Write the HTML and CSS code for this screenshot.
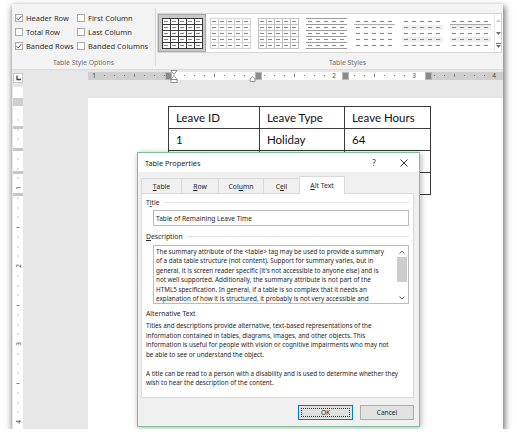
FILE: index.html
```html
<!DOCTYPE html>
<html lang="en">
<head>
    <meta charset="UTF-8">
    <title>Table Properties - Alt Text</title>
    <link rel="stylesheet" href="styles.css">
</head>
<body>
<div class="shot">
    <div class="ribbon">
        <div class="style-options">
            <div class="option-grid">
                <div class="opt"><span class="box"><svg width="6" height="6" viewBox="0 0 6 6"><polyline points="0.6,3.2 2.3,4.9 5.4,1.1" fill="none" stroke="#3c3c3c" stroke-width="0.9"/></svg></span>Header Row</div>
                <div class="opt"><span class="box"></span>First Column</div>
                <div class="opt"><span class="box"></span>Total Row</div>
                <div class="opt"><span class="box"></span>Last Column</div>
                <div class="opt"><span class="box"><svg width="6" height="6" viewBox="0 0 6 6"><polyline points="0.6,3.2 2.3,4.9 5.4,1.1" fill="none" stroke="#3c3c3c" stroke-width="0.9"/></svg></span>Banded Rows</div>
                <div class="opt"><span class="box"></span>Banded Columns</div>
            </div>
            <div class="group-label">Table Style Options</div>
        </div>
        <div class="group-sep"></div>
        <div class="table-styles">
            <div class="gallery">
                <div class="thumbs">
                    <div class="thumb sel">
                        <svg width="41" height="31">
                            <defs>
                                <pattern id="tsDash" width="8" height="6" patternUnits="userSpaceOnUse">
                                    <rect x="2" y="3" width="4" height="1" fill="#858585"/>
                                </pattern>
                            </defs>
                            <rect width="41" height="31" fill="url(#tsDash)"/>
                            <path d="M0 .5h41M0 6.5h41M0 12.5h41M0 18.5h41M0 24.5h41M0 30.5h41M.5 0v31M8.5 0v31M16.5 0v31M24.5 0v31M32.5 0v31M40.5 0v31" stroke="#3a3a3a"/>
                        </svg>
                    </div>
                    <div class="thumb">
                        <svg width="41" height="31">
                            <rect width="41" height="31" fill="url(#tsDash)"/>
                            <path d="M0 .5h41M0 6.5h41M0 12.5h41M0 18.5h41M0 24.5h41M0 30.5h41M.5 0v31M8.5 0v31M16.5 0v31M24.5 0v31M32.5 0v31M40.5 0v31" stroke="#d4d4d4"/>
                        </svg>
                    </div>
                    <div class="thumb">
                        <svg width="41" height="31">
                            <rect width="41" height="31" fill="url(#tsDash)"/>
                            <path d="M0 .5h41M0 6.5h41M0 12.5h41M0 18.5h41M0 24.5h41M0 30.5h41M.5 0v31M8.5 0v31M16.5 0v31M24.5 0v31M32.5 0v31M40.5 0v31" stroke="#c2c2c2"/>
                        </svg>
                    </div>
                    <div class="thumb">
                        <svg width="41" height="31">
                            <rect width="41" height="31" fill="url(#tsDash)"/>
                            <path d="M0 .5h41M0 6.5h41M0 12.5h41M0 18.5h41M0 24.5h41M0 30.5h41" stroke="#9c9c9c"/>
                        </svg>
                    </div>
                    <div class="thumb">
                        <svg width="41" height="31">
                            <rect width="41" height="31" fill="url(#tsDash)"/>
                            <path d="M0 6.5h41" stroke="#b0b0b0"/>
                        </svg>
                    </div>
                    <div class="thumb">
                        <svg width="41" height="31">
                            <path d="M0 7h41v5H0zM0 19h41v5H0z" fill="#efefef"/>
                            <rect width="41" height="31" fill="url(#tsDash)"/>
                        </svg>
                    </div>
                    <div class="thumb">
                        <svg width="41" height="31">
                            <path d="M0 7h41v5H0zM0 19h41v5H0z" fill="#efefef"/>
                            <rect width="41" height="31" fill="url(#tsDash)"/>
                            <path d="M0 6.5h41" stroke="#a8a8a8"/>
                        </svg>
                    </div>
                </div>
                <div class="gallery-scroll">
                    <span class="gs-btn"><svg width="5" height="3"><path d="M0 3L2.5 0 5 3z" fill="#cfcfcf"/></svg></span>
                    <span class="gs-btn"><svg width="5" height="3"><path d="M0 0L2.5 3 5 0z" fill="#6f6f6f"/></svg></span>
                    <span class="gs-btn"><svg width="5" height="5"><path d="M0 .5h5" stroke="#6f6f6f"/><path d="M0 2L2.5 5 5 2z" fill="#6f6f6f"/></svg></span>
                </div>
            </div>
            <div class="group-label">Table Styles</div>
        </div>
    </div>

    <div class="ruler-row">
        <div class="tab-selector">
            <svg width="6" height="6"><path d="M2 0.5v4h4" fill="none" stroke="#444" stroke-width="1.3"/></svg>
        </div>
        <svg class="hruler" width="415" height="14">
            <rect x="0" y="2" width="83" height="8" fill="#cecece"/>
            <rect x="83" y="2" width="254" height="8" fill="#fff"/>
            <rect x="337" y="2" width="78" height="8" fill="#cecece"/>
            <path d="M16 5.5h1M26 5.5h1M36 5.5h1M56 5.5h1M66 5.5h1M76 5.5h1M96 5.5h1M106 5.5h1M116 5.5h1M136 5.5h1M146 5.5h1M156 5.5h1M176 5.5h1M186 5.5h1M196 5.5h1M216 5.5h1M226 5.5h1M236 5.5h1M266 5.5h1M276 5.5h1M296 5.5h1M306 5.5h1M316 5.5h1M346 5.5h1M356 5.5h1M376 5.5h1M386 5.5h1M396 5.5h1" stroke="#808080"/>
            <path d="M46.5 4v3M126.5 4v3M206.5 4v3M286.5 4v3M366.5 4v3" stroke="#808080"/>
            <g class="ruler-num">
                <text x="6" y="8">1</text>
                <text x="246" y="8">2</text>
                <text x="326" y="8">3</text>
                <text x="406" y="8">4</text>
            </g>
            <g fill="#8a8a8a" stroke="#b8b8b8">
                <rect x="77.5" y="2.5" width="6" height="7"/>
                <rect x="167.5" y="2.5" width="6" height="7"/>
                <rect x="254.5" y="2.5" width="6" height="7"/>
                <rect x="337.5" y="2.5" width="6" height="7"/>
            </g>
            <g fill="#fff" stroke="#7a7a7a" stroke-width="0.8">
                <path d="M83 .5h6L86 4.5z"/>
                <path d="M86 5.5L83 9.5h6z"/>
                <rect x="83" y="9.5" width="6" height="3"/>
                <path d="M162 11.5V9l2.5-2.5L167 9v2.5z"/>
            </g>
        </svg>
    </div>

    <div class="doc">
        <svg class="vruler" width="10" height="345">
            <rect x="0" y="3" width="10" height="342" fill="#fff"/>
            <rect x="0" y="14" width="10" height="8" fill="#cecece"/>
            <path d="M4.5 36h1M4.5 46h1M4.5 55h1M4.5 75h1M4.5 85h1M4.5 94h1M4.5 114h1M4.5 124h1M4.5 133h1M4.5 153h1M4.5 163h1M4.5 172h1M4.5 192h1M4.5 202h1M4.5 211h1M4.5 231h1M4.5 241h1M4.5 250h1M4.5 270h1M4.5 280h1M4.5 289h1M4.5 309h1M4.5 319h1M4.5 328h1" stroke="#808080"/>
            <path d="M3.5 65.5h3M3.5 143.5h3M3.5 221.5h3M3.5 299.5h3" stroke="#808080"/>
            <g class="ruler-num">
                <text x="5" y="104" transform="rotate(-90 5 104)">1</text>
                <text x="5" y="182" transform="rotate(-90 5 182)">2</text>
                <text x="5" y="260" transform="rotate(-90 5 260)">3</text>
                <text x="5" y="338" transform="rotate(-90 5 338)">4</text>
            </g>
            <g fill="#c6c6c6">
                <rect x="0" y="42" width="10" height="3"/>
                <rect x="0" y="64" width="10" height="3"/>
                <rect x="0" y="87" width="10" height="3"/>
                <rect x="0" y="109" width="10" height="3"/>
            </g>
        </svg>
        <div class="page">
            <table class="leave">
                <colgroup>
                    <col style="width: 91px">
                    <col style="width: 85px">
                    <col style="width: 86px">
                </colgroup>
                <tr><td>Leave ID</td><td>Leave Type</td><td>Leave Hours</td></tr>
                <tr><td>1</td><td>Holiday</td><td>64</td></tr>
                <tr><td></td><td></td><td></td></tr>
                <tr><td></td><td></td><td></td></tr>
            </table>
        </div>
    </div>

    <div class="dialog">
        <div class="dlg-title">
            <span class="dlg-name">Table Properties</span>
            <span class="dlg-btn">?</span>
            <span class="dlg-btn"><svg width="8" height="8"><path d="M.5 .5l7 7M7.5 .5l-7 7" stroke="#222" stroke-width="0.9"/></svg></span>
        </div>
        <div class="tabs">
            <div class="tab w-table"><u>T</u>able</div>
            <div class="tab w-row"><u>R</u>ow</div>
            <div class="tab w-column">Col<u>u</u>mn</div>
            <div class="tab w-cell">C<u>e</u>ll</div>
            <div class="tab w-alt active"><u>A</u>lt Text</div>
        </div>
        <div class="panel">
            <div class="field-head">T<u>i</u>tle</div>
            <div class="field-input">Table of Remaining Leave Time</div>
            <div class="field-head field-gap"><u>D</u>escription</div>
            <div class="field-area">
                <div class="area-text">
                    The summary attribute of the &lt;table&gt; tag may be used to provide a summary<br>
                    of a data table structure (not content). Support for summary varies, but in<br>
                    general, it is screen reader specific (it's not accessible to anyone else) and is<br>
                    not well supported. Additionally, the summary attribute is not part of the<br>
                    HTML5 specification. In general, if a table is so complex that it needs an<br>
                    explanation of how it is structured, it probably is not very accessible and
                </div>
                <div class="area-scroll">
                    <span class="scroll-btn"><svg width="6" height="4"><path d="M.5 3.5L3 1l2.5 2.5" fill="none" stroke="#555" stroke-width="0.9"/></svg></span>
                    <span class="scroll-thumb"></span>
                    <span class="scroll-fill"></span>
                    <span class="scroll-btn"><svg width="6" height="4"><path d="M.5 .5L3 3l2.5-2.5" fill="none" stroke="#555" stroke-width="0.9"/></svg></span>
                </div>
            </div>
            <div class="section-label">Alternative Text</div>
            <p class="alt-para">
                Titles and descriptions provide alternative, text-based representations of the<br>
                information contained in tables, diagrams, images, and other objects. This<br>
                information is useful for people with vision or cognitive impairments who may not<br>
                be able to see or understand the object.
            </p>
            <p class="alt-para">
                A title can be read to a person with a disability and is used to determine whether they<br>
                wish to hear the description of the content.
            </p>
        </div>
        <div class="dlg-actions">
            <div class="btn ok">OK</div>
            <div class="btn cancel">Cancel</div>
        </div>
    </div>
</div>
</body>
</html>
```

FILE: styles.css
```css
body {
    margin: 0;
    background: #fff;
    font-family: "Noto Sans", "Open Sans", sans-serif;
    color: #262626;
}

.shot {
    position: relative;
    display: flex;
    flex-direction: column;
    width: 491px;
    height: 425px;
    margin: 4px 0 0 12px;
    background: #e6e6e6;
    overflow: hidden;
    box-shadow: 1px 3px 6px 1px rgba(0, 0, 0, 0.55);
}

/* ribbon */
.ribbon {
    display: flex;
    flex-shrink: 0;
    height: 65px;
    background: #f3f3f3;
    border-bottom: 1px solid #dcdcdc;
}

.style-options {
    width: 143px;
    padding-top: 7px;
}

.option-grid {
    display: grid;
    grid-template-columns: 62px 1fr;
    grid-auto-rows: 14px;
    padding-left: 3px;
}

.opt {
    display: flex;
    align-items: center;
    font-size: 7.5px;
    color: #303030;
    white-space: nowrap;
}

.box {
    display: flex;
    align-items: center;
    justify-content: center;
    width: 8px;
    height: 8px;
    box-sizing: border-box;
    margin-right: 3px;
    border: 1px solid #ababab;
    background: #fff;
}

.group-label {
    height: 10px;
    margin-top: 5px;
    line-height: 10px;
    font-size: 6.8px;
    color: #707070;
    text-align: center;
}

.group-sep {
    width: 1px;
    margin: 4px 0 3px;
    background: #d9d9d9;
}

.table-styles {
    flex: 1;
    padding: 9px 1px 0;
}

.table-styles .group-label {
    text-align: left;
    padding-left: 172px;
}

.gallery {
    display: flex;
    height: 40px;
    box-sizing: border-box;
    border: 1px solid #d6d6d6;
    background: #fff;
}

.thumbs {
    display: flex;
    width: 336px;
}

.thumb {
    display: flex;
    align-items: center;
    justify-content: center;
    width: 48px;
    height: 38px;
    box-sizing: border-box;
}

.thumb svg {
    display: block;
    background: #fff;
}

.thumb.sel {
    background: #c9c9c9;
    border: 1px solid #a8a8a8;
}

.gallery-scroll {
    flex: 1;
    display: flex;
    flex-direction: column;
    border-left: 1px solid #e8e8e8;
}

.gs-btn {
    flex: 1;
    display: flex;
    align-items: center;
    justify-content: center;
}

/* rulers */
.ruler-row {
    display: flex;
    flex-shrink: 0;
    height: 14px;
}

.tab-selector {
    display: flex;
    align-items: center;
    justify-content: center;
    width: 10px;
    height: 10px;
    box-sizing: border-box;
    margin: 3px 0 0 1px;
    background: #fff;
    border: 1px solid #c8c8c8;
}

.hruler {
    display: block;
    margin-left: 65px;
}

.ruler-num {
    font-family: "Noto Sans", sans-serif;
    font-size: 6.5px;
    fill: #4a4a4a;
    text-anchor: middle;
}

.vruler .ruler-num text {
    dominant-baseline: central;
}

.doc {
    flex: 1;
    display: flex;
    min-height: 0;
}

.vruler {
    display: block;
    flex-shrink: 0;
    margin-left: 1px;
}

.page {
    flex: 1;
    margin: 14px 0 0 65px;
    background: #fff;
}

.leave {
    margin: 8px 0 0 80px;
    width: 262px;
    table-layout: fixed;
    border-collapse: collapse;
    font-family: Lato, "Noto Sans", sans-serif;
    font-size: 11.5px;
    color: #111;
}

.leave tr {
    height: 22px;
}

.leave td {
    padding: 0 0 0 7px;
    border: 1px solid #3a3a3a;
    white-space: nowrap;
}

/* dialog */
.dialog {
    position: absolute;
    left: 125px;
    top: 148px;
    display: flex;
    flex-direction: column;
    width: 283px;
    height: 275px;
    box-sizing: border-box;
    border: 1px solid #7dbf96;
    background: #f0f0f0;
    box-shadow: 1px 1px 6px rgba(0, 0, 0, 0.3);
}

.dlg-title {
    display: flex;
    align-items: center;
    height: 19px;
    padding-left: 7px;
    background: #fff;
    font-size: 7.3px;
    color: #1e1e1e;
}

.dlg-name {
    flex: 1;
}

.dlg-btn {
    display: flex;
    align-items: center;
    justify-content: center;
    width: 30px;
    font-size: 8px;
}

.tabs {
    position: relative;
    z-index: 1;
    display: flex;
    align-items: flex-end;
    height: 17px;
    margin: 4px 0 0 3px;
}

.tab {
    display: flex;
    align-items: center;
    justify-content: center;
    height: 15px;
    box-sizing: border-box;
    margin-right: -1px;
    border: 1px solid #d9d9d9;
    border-bottom: none;
    font-size: 6.8px;
    color: #222;
}

.tab.active {
    height: 18px;
    margin-bottom: -1px;
    background: #fff;
}

.w-table { width: 41px; }
.w-row { width: 38px; }
.w-column { width: 46px; }
.w-cell { width: 37px; }
.w-alt { width: 46px; }

.panel {
    width: 273px;
    height: 205px;
    box-sizing: border-box;
    margin-left: 3px;
    padding: 0 4px;
    border: 1px solid #d9d9d9;
    background: #fff;
}

.field-head {
    display: flex;
    align-items: center;
    height: 10px;
    margin-top: 3px;
    font-size: 6.8px;
}

.field-head::after {
    content: "";
    flex: 1;
    height: 1px;
    margin-left: 4px;
    background: #e3e3e3;
}

.field-head.field-gap {
    margin-top: 5px;
}

.field-input {
    display: flex;
    align-items: center;
    height: 16px;
    box-sizing: border-box;
    margin: 3px 0 0 7px;
    padding-left: 2px;
    border: 1px solid #bcbcbc;
    font-size: 6.6px;
}

.field-area {
    display: flex;
    height: 59px;
    box-sizing: border-box;
    margin: 4px 0 0 7px;
    border: 1px solid #bcbcbc;
}

.area-text {
    flex: 1;
    overflow: hidden;
    padding: 1px 0 0 2px;
    font-size: 6.3px;
    line-height: 9.4px;
    white-space: nowrap;
}

.area-scroll {
    display: flex;
    flex-direction: column;
    width: 12px;
}

.scroll-btn {
    display: flex;
    align-items: center;
    justify-content: center;
    height: 11px;
}

.scroll-thumb {
    height: 25px;
    margin: 0 1px;
    background: #cdcdcd;
}

.scroll-fill {
    flex: 1;
}

.section-label {
    height: 10px;
    margin-top: 5px;
    line-height: 10px;
    font-size: 6.8px;
}

.alt-para {
    margin: 2px 0 0;
    font-size: 6.3px;
    line-height: 9.5px;
    white-space: nowrap;
}

.alt-para + .alt-para {
    margin-top: 9.5px;
}

.dlg-actions {
    display: flex;
    justify-content: flex-end;
    gap: 7px;
    margin: 7px 5px 0 0;
}

.btn {
    position: relative;
    display: flex;
    align-items: center;
    justify-content: center;
    height: 15px;
    box-sizing: border-box;
    border: 1px solid #adadad;
    background: #e1e1e1;
    font-size: 6.6px;
    color: #1e1e1e;
}

.btn.ok {
    width: 55px;
    border-color: #0078d7;
}

.btn.ok::after {
    content: "";
    position: absolute;
    inset: 2px;
    border: 1px dotted #333;
}

.btn.cancel {
    width: 54px;
}
```
